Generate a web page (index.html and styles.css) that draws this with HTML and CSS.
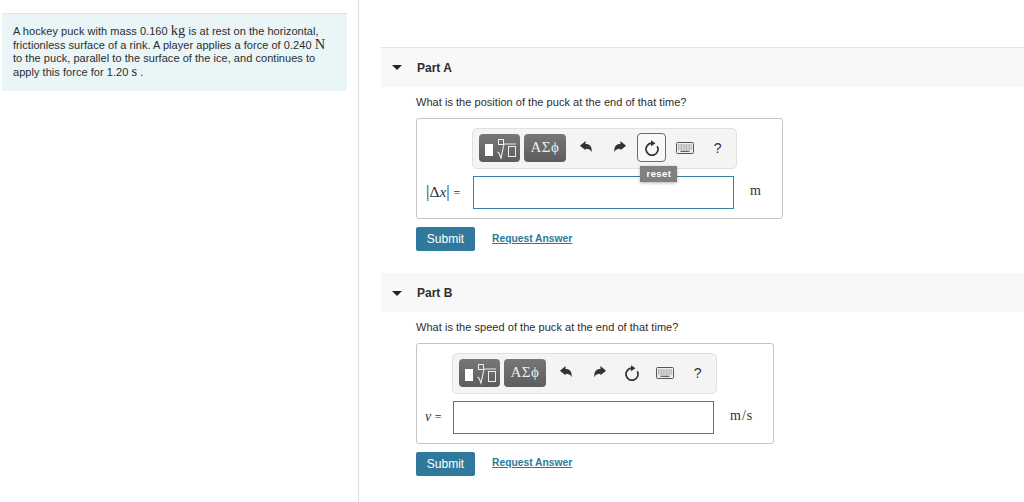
FILE: index.html
```html
<!DOCTYPE html>
<html lang="en">
<head>
<meta charset="utf-8">
<title>Hockey puck problem</title>
<link rel="stylesheet" href="styles.css">
</head>
<body>
<svg class="defs" width="0" height="0" aria-hidden="true">
  <defs>
    <symbol id="i-undo" viewBox="0 0 16 16"><path d="M1 6 7 1v3.200c4.500 0 7 2.500 6.500 9-.8-2.800-2.500-4-6.500-4V11z" fill="#333"/></symbol>
    <symbol id="i-redo" viewBox="0 0 16 16"><path d="M15 6 9 1v3.200c-4.500 0-7 2.500-6.500 9 .8-2.800 2.500-4 6.500-4V11z" fill="#333"/></symbol>
    <symbol id="i-reset" viewBox="0 0 16 16"><path d="M8 3.200A6 6 0 1 0 13.200 6.200" fill="none" stroke="#333" stroke-width="1.700"/><path d="M7 .2l4.500 3L7 6.200z" fill="#333"/></symbol>
    <symbol id="i-keys" viewBox="0 0 18 12"><rect x=".5" y=".5" width="17" height="11" rx="1" fill="#eee" stroke="#555"/><path d="M2 3h14M2 5h14M2 7h14" stroke="#777" stroke-width="1" stroke-dasharray="1 .6"/><path d="M4.500 9.300h9" stroke="#555" stroke-width="1.200"/></symbol>
    <symbol id="i-tmpl" viewBox="0 0 42 26"><rect x="6" y="9" width="8" height="12" fill="#fff"/><rect x="19.500" y="4.500" width="5" height="5" fill="none" stroke="#eee" stroke-width="1"/><path d="M18.500 17l1.500 1 2 5 3-14H37" fill="none" stroke="#eee" stroke-width="1.100"/><rect x="29.500" y="11.500" width="7" height="10" fill="none" stroke="#eee" stroke-width="1"/></symbol>
  </defs>
</svg>
<div class="page">
  <aside class="left">
    <div class="problem">A hockey puck with mass 0.160 <span class="unit">kg</span> is at rest on the horizontal, frictionless surface of a rink. A player applies a force of 0.240 <span class="unit">N</span> to the puck, parallel to the surface of the ice, and continues to apply this force for 1.20 <span class="unit">s</span> .</div>
  </aside>
  <main class="right">
    <section class="part part-a">
      <header class="part-head"><span class="caret"></span><h2 class="part-title">Part A</h2></header>
      <p class="question">What is the position of the puck at the end of that time?</p>
      <div class="answer answer-a">
        <div class="toolbar toolbar-a">
          <span class="tool-btn tool-tmpl"><svg class="tmpl"><use href="#i-tmpl"/></svg></span>
          <span class="tool-btn tool-greek">ΑΣϕ</span>
          <span class="tool"><svg class="ic"><use href="#i-undo"/></svg></span>
          <span class="tool"><svg class="ic"><use href="#i-redo"/></svg></span>
          <span class="tool tool-focus"><svg class="ic ic-reset"><use href="#i-reset"/></svg><span class="tip">reset</span></span>
          <span class="tool"><svg class="ic-keys"><use href="#i-keys"/></svg></span>
          <span class="tool tool-help">?</span>
        </div>
        <div class="entry">
          <span class="lhs lhs-a"><span class="bar">|</span>Δ<i>x</i><span class="bar">|</span> <span class="eq">=</span></span>
          <div class="field"></div>
          <span class="rhs rhs-a">m</span>
        </div>
      </div>
      <div class="actions"><button class="submit" type="button">Submit</button><a class="request" href="#">Request Answer</a></div>
    </section>
    <section class="part part-b">
      <header class="part-head"><span class="caret"></span><h2 class="part-title">Part B</h2></header>
      <p class="question">What is the speed of the puck at the end of that time?</p>
      <div class="answer answer-b">
        <div class="toolbar toolbar-b">
          <span class="tool-btn tool-tmpl"><svg class="tmpl"><use href="#i-tmpl"/></svg></span>
          <span class="tool-btn tool-greek">ΑΣϕ</span>
          <span class="tool"><svg class="ic"><use href="#i-undo"/></svg></span>
          <span class="tool"><svg class="ic"><use href="#i-redo"/></svg></span>
          <span class="tool"><svg class="ic ic-reset"><use href="#i-reset"/></svg></span>
          <span class="tool"><svg class="ic-keys"><use href="#i-keys"/></svg></span>
          <span class="tool tool-help">?</span>
        </div>
        <div class="entry">
          <span class="lhs lhs-b"><i>v</i> <span class="eq">=</span></span>
          <div class="field"></div>
          <span class="rhs rhs-b">m/s</span>
        </div>
      </div>
      <div class="actions"><button class="submit" type="button">Submit</button><a class="request" href="#">Request Answer</a></div>
    </section>
  </main>
</div>
</body>
</html>
```
FILE: styles.css
```css
* { box-sizing: border-box; }
html, body { margin: 0; padding: 0; background: #fff; }
body { width: 1024px; height: 502px; overflow: hidden; font-family: "Liberation Sans", Arial, sans-serif; color: #2d2d2d; }
.defs { position: absolute; }
.page { display: flex; height: 502px; }
.left { width: 359px; flex: none; padding: 13px 11px 0 2px; border-right: 1px solid #d9dfe3; }
.problem { height: 78px; padding: 11px 14px 0 11px; background: #e9f5f7; border-top: 1px solid #dfe6ea; font-size: 11px; line-height: 13.670px; letter-spacing: .04px; }
.unit { font-family: "Liberation Serif", serif; font-size: 14.500px; line-height: 10px; }
.right { flex: 1; min-width: 0; padding: 47px 0 0 22px; }
.part-head { display: flex; align-items: center; height: 40px; background: #f8f8f8; border-top: 1px solid #e2e2e2; }
.part-b { margin-top: 22px; }
.part-b .part-head { border-top-color: #f8f8f8; height: 39px; }
.caret { width: 0; height: 0; margin-left: 11px; border-left: 5px solid transparent; border-right: 5px solid transparent; border-top: 5px solid #222; }
.part-title { margin: 0 0 0 15px; font-size: 12px; line-height: 14px; font-weight: 700; color: #2d2d2d; }
.question { margin: 8px 0 0 35px; font-size: 11px; line-height: 14px; letter-spacing: .035px; }
.answer { margin: 9px 0 0 35px; height: 101px; border: 1px solid #c4c4c4; border-radius: 3px; padding-top: 9px; }
.answer-a { width: 367px; }
.answer-b { width: 358px; }
.toolbar { display: flex; align-items: center; width: 265px; height: 41px; padding: 0 0 2px 6px; background: #f4f4f4; border: 1px solid #e0e0e0; border-radius: 5px; }
.toolbar-a { margin-left: 55px; }
.toolbar-b { margin-left: 35px; }
.tool-btn { display: flex; align-items: center; justify-content: center; height: 28px; border-radius: 4px; background: linear-gradient(#777, #5d5d5d); color: #eee; }
.tool-tmpl { width: 41px; margin-right: 4px; }
.tool-greek { width: 42px; margin-right: 6px; font-family: "Liberation Serif", serif; font-size: 15px; letter-spacing: .4px; }
.tmpl { width: 42px; height: 26px; flex: none; }
.tool { position: relative; display: flex; align-items: center; justify-content: center; width: 29px; height: 29px; margin-right: 4px; border-radius: 4px; }
.tool-focus { border: 1px solid #3a7a9a; background: #f8f8f8; }
.ic { width: 15px; height: 15px; }
.ic-reset { width: 16px; height: 16px; }
.ic-keys { width: 18px; height: 12px; }
.tool-help { font-family: "Liberation Sans", sans-serif; font-size: 14px; color: #333; }
.tip { position: absolute; top: 32px; left: 2px; z-index: 2; width: 37px; height: 16px; background: #808080; color: #fff; font-size: 9.500px; font-weight: 700; line-height: 16px; text-align: center; letter-spacing: .4px; box-shadow: 0 1px 3px rgba(0,0,0,.3); }
.entry { display: flex; align-items: center; height: 33px; margin-top: 7px; }
.lhs { font-family: "Liberation Serif", serif; font-size: 15.500px; color: #333; white-space: nowrap; padding-bottom: 2px; }
.lhs-a { width: 47px; margin-left: 9px; }
.lhs-b { width: 28px; margin-left: 8px; font-size: 14px; }
.eq { font-size: 12px; }
.bar { font-size: 17px; }
.field { width: 261px; height: 33px; background: #fff; border: 1px solid #3a80a0; }
.rhs { font-family: "Liberation Serif", serif; font-size: 14px; letter-spacing: .5px; color: #333; padding-bottom: 3px; }
.rhs-a { margin-left: 16px; }
.rhs-b { margin-left: 16px; letter-spacing: 1px; }
.actions { display: flex; align-items: center; margin: 8px 0 0 35px; }
.submit { width: 59px; height: 24px; padding: 0; border: 0; border-radius: 2px; background: #2f7a9c; color: #fff; font: 12px "Liberation Sans", Arial, sans-serif; }
.request { margin: 0 0 1px 17px; font-size: 10.300px; font-weight: 700; color: #2b7a9c; text-decoration: underline; }
.part-b .request { margin-bottom: 3px; }
```
